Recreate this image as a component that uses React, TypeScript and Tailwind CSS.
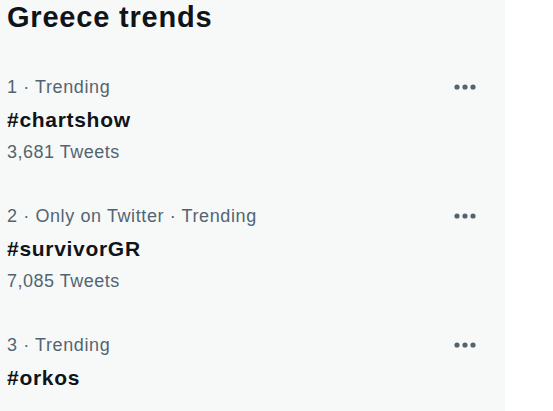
import React from "react";

const trends = [
  { meta: "1 · Trending", tag: "#chartshow", count: "3,681 Tweets" },
  { meta: "2 · Only on Twitter · Trending", tag: "#survivorGR", count: "7,085 Tweets" },
  { meta: "3 · Trending", tag: "#orkos", count: "" },
];

function Dots() {
  return (
    <div className="flex h-[34px] w-[34px] items-center justify-center rounded-full">
      <svg width="22" height="6" viewBox="0 0 22 6">
        <circle cx="3" cy="3" r="2.6" fill="#536471" />
        <circle cx="11" cy="3" r="2.6" fill="#536471" />
        <circle cx="19" cy="3" r="2.6" fill="#536471" />
      </svg>
    </div>
  );
}

export default function App() {
  return (
    <div className="h-[411px] w-[553px] overflow-hidden bg-white font-['Liberation_Sans',Arial,sans-serif]">
      <div className="h-full w-[505px] bg-[#f7f9f9]">
        <div className="px-[7px] pt-0 text-[29px] font-bold leading-[34px] tracking-[0.8px] text-[#0f1419]">Greece trends</div>
        <div className="mt-[41px] flex flex-col">
          {trends.map((t) => (
            <div key={t.tag} className="relative h-[129px] pl-[7px]">
              <div className="text-[18px] leading-[24px] tracking-[0.6px] text-[#536471]">{t.meta}</div>
              <div className="mt-[9px] text-[21px] font-bold leading-[24px] tracking-[0.7px] text-[#0f1419]">{t.tag}</div>
              {t.count && (
                <div className="mt-[8px] text-[18px] leading-[24px] tracking-[0.5px] text-[#536471]">{t.count}</div>
              )}
              <div className="absolute right-[23px] top-[-5px]">
                <Dots />
              </div>
            </div>
          ))}
        </div>
      </div>
    </div>
  );
}
